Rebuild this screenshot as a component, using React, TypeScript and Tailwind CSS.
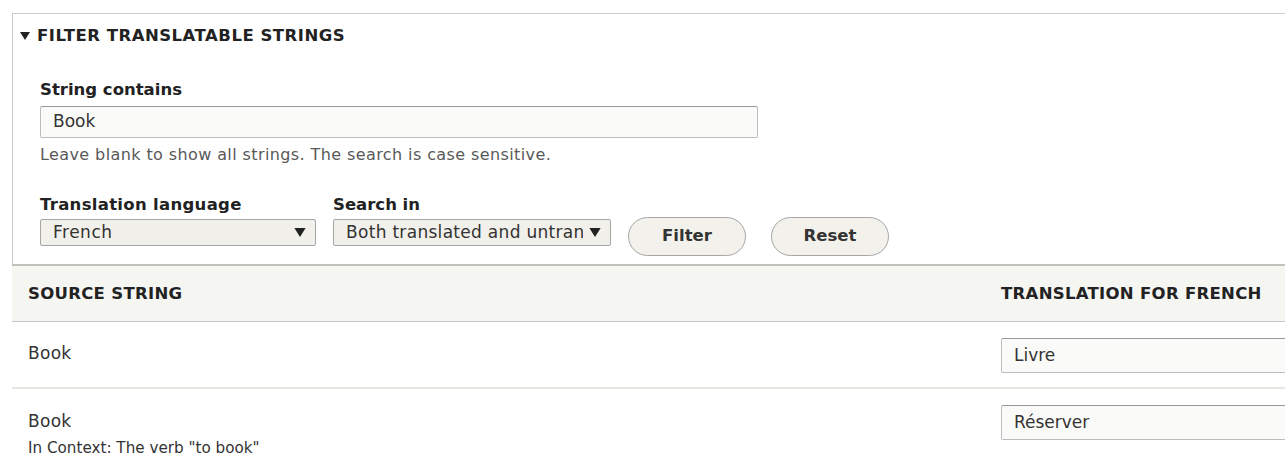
import React from "react";

const font = { fontFamily: '"DejaVu Sans", Verdana, sans-serif' };

function Caret({ w = 10, h = 8 }: { w?: number; h?: number }) {
  return (
    <svg width={w} height={h} viewBox="0 0 10 8" className="shrink-0">
      <path d="M0 0 L10 0 L5 8 Z" fill="#222" />
    </svg>
  );
}

const inputBox =
  "rounded-[2px] border border-[#bdbdbd] border-t-[#999] bg-[#fafaf8] flex items-center px-[12px] text-[17px] text-[#333]";
const selectBox =
  "h-[27px] rounded-[2px] border border-[#a6a6a6] bg-[#f1f0ea] flex items-center justify-between pl-[12px] pr-[9px] text-[17px] text-[#333]";
const pillBtn =
  "h-[39px] rounded-full border border-[#a6a6a6] bg-[#f2f1eb] text-[16.5px] font-bold text-[#333]";

export default function App() {
  return (
    <div className="w-[1285px] h-[467px] overflow-hidden bg-white text-[#333]" style={font}>
      <div className="ml-[12px] pt-[13px] w-[1320px]">
        <div className="border border-b-0 border-[#cccccc] h-[251px]">
          <div className="flex items-center gap-[7px] pl-[7px] mt-[12px] h-[20px]">
            <Caret />
            <span className="text-[16.5px] leading-[20px] font-bold uppercase text-[#222] tracking-[0.5px]">
              Filter translatable strings
            </span>
          </div>

          <div className="pl-[27px] pt-[34px]">
            <label className="block text-[16.5px] leading-[20px] font-bold text-[#222]">String contains</label>
            <div className={`${inputBox} mt-[6px] w-[718px] h-[32px]`}>Book</div>
            <p className="mt-[7px] text-[16px] leading-[20px] text-[#595959] tracking-[0.4px]">
              Leave blank to show all strings. The search is case sensitive.
            </p>

            <div className="mt-[30px] flex items-start">
              <div>
                <label className="block text-[16.5px] leading-[20px] font-bold text-[#222] tracking-[0.3px]">
                  Translation language
                </label>
                <div className={`${selectBox} mt-[4px] w-[276px]`}>
                  <span className="tracking-[0.5px]">French</span>
                  <Caret w={12} h={9} />
                </div>
              </div>
              <div className="ml-[17px]">
                <label className="block text-[16.5px] leading-[20px] font-bold text-[#222]">Search in</label>
                <div className={`${selectBox} mt-[4px] w-[278px]`}>
                  <span className="whitespace-nowrap overflow-hidden w-[237px] tracking-[0.3px]">
                    Both translated and untranslated
                  </span>
                  <Caret w={12} h={9} />
                </div>
              </div>
              <div className="flex gap-[25px] ml-[17px] mt-[22px]">
                <button className={`${pillBtn} w-[118px]`}>Filter</button>
                <button className={`${pillBtn} w-[118px]`}>Reset</button>
              </div>
            </div>
          </div>
        </div>

        <div className="grid grid-cols-[973px_1fr] h-[58px] items-center bg-[#f5f5f2] border-t-2 border-[#c2c2bd] border-b border-b-[#c8c8c3] text-[16.5px] font-bold uppercase text-[#222] tracking-[0.3px]">
          <div className="pl-[16px] pt-[2px]">Source string</div>
          <div className="pl-[16px] pt-[2px]">Translation for French</div>
        </div>

        <div className="grid grid-cols-[973px_1fr] h-[67px] border-b-2 border-[#e8e6e1] text-[17px]">
          <div className="pl-[16px] pt-[21px] leading-[20px] tracking-[0.3px]">Book</div>
          <div className="pl-[16px] pt-[16px]">
            <div className={`${inputBox} h-[35px]`}>Livre</div>
          </div>
        </div>

        <div className="grid grid-cols-[973px_1fr] h-[78px] text-[17px]">
          <div className="pl-[16px] pt-[22px]">
            <div className="leading-[20px] tracking-[0.3px]">Book</div>
            <div className="mt-[8px] text-[15.2px] leading-[18px]">In Context: The verb "to book"</div>
          </div>
          <div className="pl-[16px] pt-[16px]">
            <div className={`${inputBox} h-[35px]`}>Réserver</div>
          </div>
        </div>
      </div>
    </div>
  );
}
